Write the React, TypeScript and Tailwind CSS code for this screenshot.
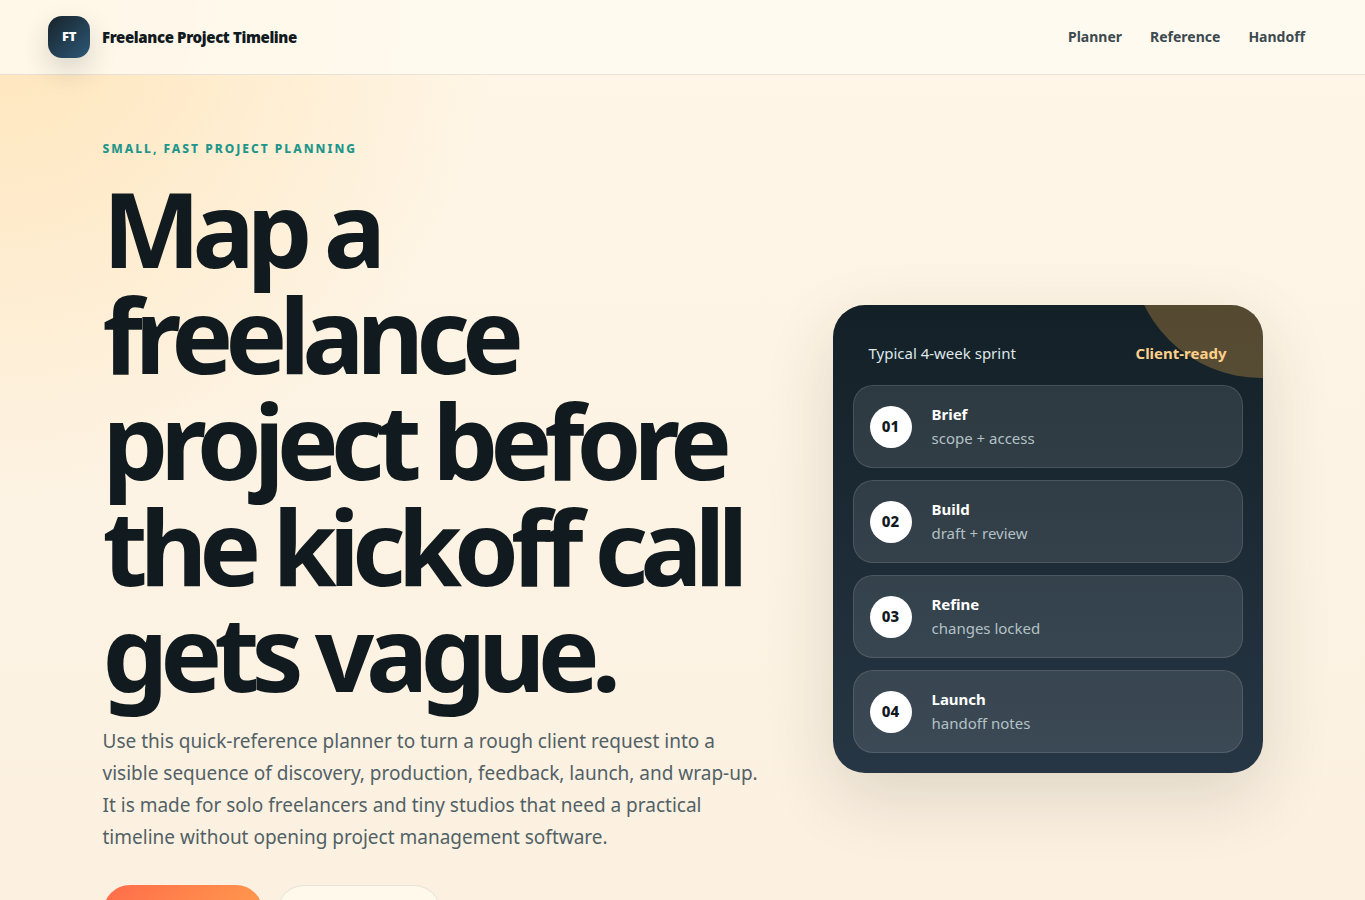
interface Step {
  number: string;
  title: string;
  note: string;
}

const steps: Step[] = [
  { number: "01", title: "Brief", note: "scope + access" },
  { number: "02", title: "Build", note: "draft + review" },
  { number: "03", title: "Refine", note: "changes locked" },
  { number: "04", title: "Launch", note: "handoff notes" },
];

function Navbar() {
  return (
    <header className="border-b border-[#132027]/10 bg-[#fffaf0]/85">
      <div className="flex items-center justify-between px-12 py-4">
        <a href="#" className="flex items-center gap-3 text-[#111a1e]">
          <span className="flex size-[42px] items-center justify-center rounded-[14px] bg-linear-135 from-[#17242c] to-[#2d5878] text-[13px] font-black tracking-tight text-white shadow-[0_12px_28px_rgba(19,32,39,0.16)]">
            FT
          </span>
          <span className="text-[15px] font-black tracking-tight">
            Freelance Project Timeline
          </span>
        </a>
        <nav className="flex gap-1 text-sm font-bold text-[#3c4a4f]">
          <a href="#planner" className="px-3">Planner</a>
          <a href="#reference" className="px-3">Reference</a>
          <a href="#handoff" className="px-3">Handoff</a>
        </nav>
      </div>
    </header>
  );
}

function SprintCard() {
  return (
    <aside className="relative overflow-hidden rounded-[32px] bg-linear-to-b from-[#132027] to-[#263644] p-5 shadow-[0_24px_70px_rgba(40,45,25,0.14)]">
      <div className="absolute -top-[187px] -right-32 size-[260px] rounded-full bg-[#ffb74d]/28" />
      <div className="relative flex justify-between px-4 pt-4 pb-5 text-[15px] leading-6">
        <span className="text-[#dfe8ea]">Typical 4-week sprint</span>
        <strong className="text-[#ffd08a]">Client-ready</strong>
      </div>
      <ol className="relative flex flex-col gap-3">
        {steps.map((step) => (
          <li
            key={step.number}
            className="flex items-center gap-5 rounded-[20px] border border-white/12 bg-white/10 p-4"
          >
            <span className="flex size-[42px] items-center justify-center rounded-full bg-white text-[15px] font-extrabold text-[#111a1e]">
              {step.number}
            </span>
            <div className="text-[15px]">
              <strong className="block leading-6 text-white">{step.title}</strong>
              <span className="block leading-[25px] text-[#b3c1c5]">{step.note}</span>
            </div>
          </li>
        ))}
      </ol>
    </aside>
  );
}

function Hero() {
  return (
    <main className="mx-auto grid max-w-[1160px] items-center gap-16 py-16 lg:grid-cols-[minmax(0,1fr)_430px]">
      <section>
        <p className="text-xs leading-5 font-extrabold tracking-[2px] text-[#1f968b] uppercase">
          Small, fast project planning
        </p>
        <h1 className="mt-4 text-[104px] leading-[106px] font-bold tracking-[-8px] text-[#111a1e]">
          Map a freelance project before the kickoff call gets vague.
        </h1>
        <p className="mt-5 text-[19px] leading-8 text-[#526166]">
          Use this quick-reference planner to turn a rough client request into a
          visible sequence of discovery, production, feedback, launch, and wrap-up.
          It is made for solo freelancers and tiny studios that need a practical
          timeline without opening project management software.
        </p>
        <div className="mt-8 flex gap-3.5 text-[15px] leading-5 font-bold">
          <button className="h-[54px] w-40 rounded-full bg-linear-135 from-[#ff6b4a] to-[#ffa04d] text-white">
            Build timeline
          </button>
          <button className="h-[54px] w-[164px] rounded-full border border-[#132027]/10 bg-[#fff9ec] text-[#111a1e]">
            See reference
          </button>
        </div>
      </section>
      <SprintCard />
    </main>
  );
}

function App() {
  return (
    <div className="min-h-screen bg-[radial-gradient(circle_at_top_left,rgba(255,190,80,0.3),transparent_500px),linear-gradient(180deg,#fff6e7,#fbf0e0)] font-['Noto_Sans','Open_Sans',sans-serif]">
      <Navbar />
      <Hero />
    </div>
  );
}

export default App;
